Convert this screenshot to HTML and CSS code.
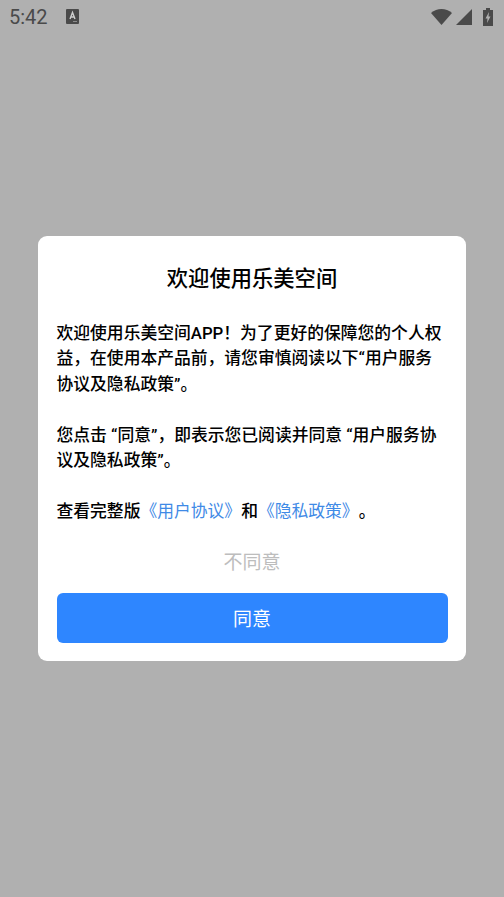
FILE: index.html
```html
<!DOCTYPE html>
<html lang="zh-CN">
<head>
    <meta charset="UTF-8">
    <meta name="viewport" content="width=device-width, initial-scale=1.0">
    <title>欢迎使用乐美空间</title>
    <link rel="stylesheet" href="styles.css">
</head>
<body>
    <!-- 状态栏 -->
    <header class="status-bar">
        <div class="status-left">
            <span class="clock">5:42</span>
            <svg class="icon-a" width="13" height="15" viewBox="0 0 13 15">
                <rect width="13" height="15" rx="1" fill="#4a4a4a"/>
                <path d="M4 10 L6.5 3.5 L9 10 M5 8 H8" fill="none" stroke="#cfcfcf" stroke-width="1.4"/>
                <path d="M7.5 12.5 H11.5" stroke="#cfcfcf" stroke-width="1.2" stroke-dasharray="1 1"/>
            </svg>
        </div>
        <div class="status-right">
            <svg class="icon-wifi" width="21" height="16" viewBox="0 0 21 16">
                <path d="M0 4 C6 -1.3 15 -1.3 21 4 L10.5 16 Z" fill="#4a4a4a"/>
            </svg>
            <svg class="icon-signal" width="16" height="16" viewBox="0 0 16 16">
                <path d="M0 16 L16 0 V16 Z" fill="#4a4a4a"/>
            </svg>
            <svg class="icon-battery" width="10" height="18" viewBox="0 0 10 18">
                <path d="M3 0 H7 V2 H10 V18 H0 V2 H3 Z" fill="#4a4a4a"/>
                <path d="M6 4 L2.5 10.5 H4.5 L4 15 L7.5 8.5 H5.5 Z" fill="#b0b0b0"/>
            </svg>
        </div>
    </header>

    <main class="overlay">
        <section class="dialog">
            <h1 class="dialog-title">欢迎使用乐美空间</h1>
            <p class="dialog-text">欢迎使用乐美空间APP！为了更好的保障您的个人权益，在使用本产品前，请您审慎阅读以下“用户服务协议及隐私政策”。</p>
            <p class="dialog-text">您点击 “同意”，即表示您已阅读并同意 “用户服务协议及隐私政策”。</p>
            <p class="dialog-text">查看完整版<a class="link" href="#">《用户协议》</a>和<a class="link" href="#">《隐私政策》</a>。</p>
            <button class="btn-refuse" type="button">不同意</button>
            <button class="btn-agree" type="button">同意</button>
        </section>
    </main>
</body>
</html>
```

FILE: styles.css
```css
/* 页面 */
html, body {
    height: 100%;
}

body {
    margin: 0;
    height: 897px;
    overflow: hidden;
    display: flex;
    flex-direction: column;
    background-color: #b0b0b0;
    font-family: "Roboto", "Noto Sans CJK SC", sans-serif;
    text-spacing-trim: space-all;
    font-feature-settings: "palt" 0, "chws" 0;
}

/* 状态栏 */
.status-bar {
    height: 33px;
    padding: 0 11px 0 9px;
    display: flex;
    justify-content: space-between;
    align-items: center;
}

.status-left {
    display: flex;
    align-items: center;
}

.clock {
    font-size: 20px;
    color: #4a4a4a;
    width: 57px;
}

.status-right {
    display: flex;
    align-items: center;
}

.icon-signal {
    margin: 0 11px 0 4px;
}

/* 弹窗 */
.overlay {
    padding: 202.5px 38px 0;
}

.dialog {
    background-color: #ffffff;
    border-radius: 9px;
    padding: 25.5px 18.5px 18px;
    height: 425.5px;
    box-sizing: border-box;
}

.dialog-title {
    margin: 0 0 23.5px;
    font-size: 21.3px;
    line-height: 36px;
    font-weight: 500;
    text-align: center;
    color: #000000;
}

.dialog-text {
    margin: 0 0 25.5px;
    font-size: 16.8px;
    line-height: 25.5px;
    font-weight: 500;
    color: #000000;
}

.link {
    color: #3f8ae6;
    font-weight: 400;
    text-decoration: none;
}

/* 按钮 */
.btn-refuse {
    display: block;
    width: 100%;
    height: 50px;
    margin-top: -14.5px;
    margin-bottom: 7px;
    padding: 0;
    border: none;
    background: none;
    font-family: inherit;
    font-size: 19px;
    color: #bdbdbd;
}

.btn-agree {
    display: block;
    width: 100%;
    height: 50px;
    padding: 0;
    border: none;
    border-radius: 6px;
    background-color: #2e86ff;
    font-family: inherit;
    font-size: 19px;
    color: #ffffff;
}
```
